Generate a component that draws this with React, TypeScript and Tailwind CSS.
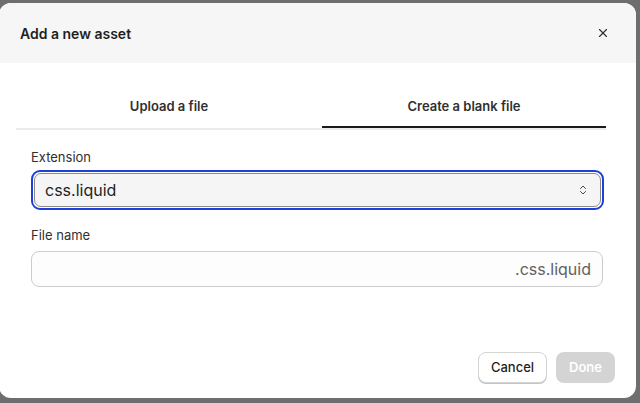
import { ChevronsUpDown, X } from 'lucide-react';

export default function App() {
  return (
    <div className="w-[640px] h-[403px] bg-[#6e6e6e] overflow-hidden pt-[3px] font-['Inter',sans-serif] text-[#303030]">
      {/* Modal */}
      <div className="w-[637px] h-[395px] -ml-[1px] bg-white rounded-xl overflow-hidden flex flex-col">
        {/* Header */}
        <div className="h-[60px] bg-[#f6f6f6] flex items-center justify-between pl-[21px] pr-[26px]">
          <h2 className="text-[14px] font-semibold text-[#1f1f1f]">Add a new asset</h2>
          <X className="w-[14px] h-[14px] text-[#303030]" strokeWidth={2} />
        </div>

        {/* Body */}
        <div className="flex-1 px-[17px] pt-[27px]">
          <div className="flex border-b-2 border-[#ebebeb] mr-[13px]">
            <button className="w-[306px] h-[38px] pt-[7px] flex justify-center items-start text-[13px] font-semibold text-[#303030]">
              Upload a file
            </button>
            <button className="flex-1 h-[38px] pt-[7px] flex justify-center items-start text-[13px] font-semibold text-[#303030] border-b-2 border-[#1a1a1a] -mb-[2px]">
              Create a blank file
            </button>
          </div>

          <div className="pl-[15px] pr-[15px] pt-[18px]">
            <label className="block text-[13px] text-[#303030] mb-[2px]">Extension</label>
            <div className="rounded-[9px] border-2 border-[#1f3fd6] p-[1px]">
              <div className="h-[34px] rounded-[7px] bg-[#f5f5f5] border border-[#8a8a8a] flex items-center justify-between pl-[10px] pr-[11px]">
                <span className="text-[16px] text-[#1f1f1f]">css.liquid</span>
                <ChevronsUpDown className="w-[12px] h-[12px] text-[#4a4a4a]" strokeWidth={2} />
              </div>
            </div>

            <label className="block text-[13px] text-[#303030] mt-[16px] mb-[6px]">File name</label>
            <div className="h-[36px] rounded-[8px] bg-[#fdfdfd] border border-[#cccccc] flex items-center justify-end pr-[11px] mr-[1px]">
              <span className="text-[16px] text-[#616161]">.css.liquid</span>
            </div>
          </div>
        </div>

        {/* Footer */}
        <div className="flex justify-end gap-[9px] pr-[21px] pb-[15px]">
          <button className="h-[31px] px-[12px] rounded-[8px] bg-white border border-[#d4d4d4] shadow-[0_1px_0_#c4c4c4] text-[13px] font-medium text-[#1f1f1f]">
            Cancel
          </button>
          <button className="h-[31px] px-[13px] rounded-[8px] bg-[#d4d4d4] text-[13px] font-semibold text-white">
            Done
          </button>
        </div>
      </div>
    </div>
  );
}
